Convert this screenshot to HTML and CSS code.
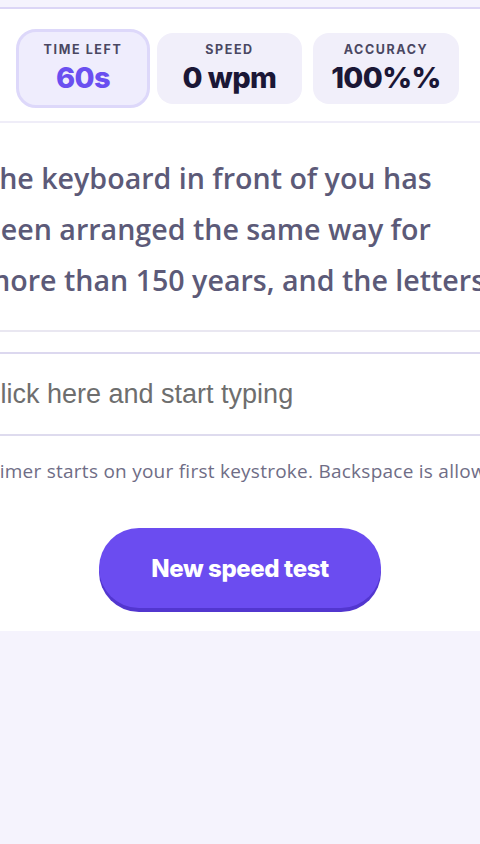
FILE: index.html
```html
<!DOCTYPE html>
<html lang="en">
<head>
    <meta charset="UTF-8">
    <meta name="viewport" content="width=device-width, initial-scale=1.0">
    <title>Typing Speed Test</title>
    <link rel="stylesheet" href="styles.css">
</head>
<body>
    <div class="page">
        <div class="card">
            <div class="stats">
                <div class="stat stat-active stat-time">
                    <span class="stat-label">Time left</span>
                    <span class="stat-value">60s</span>
                </div>
                <div class="stat stat-speed">
                    <span class="stat-label">Speed</span>
                    <span class="stat-value">0 wpm</span>
                </div>
                <div class="stat stat-acc">
                    <span class="stat-label">Accuracy</span>
                    <span class="stat-value">100%%</span>
                </div>
            </div>

            <div class="passage">
                <p>The keyboard in front of you has been arranged the same way for more than 150 years, and the letters</p>
            </div>

            <div class="typing">
                <input class="typing-input" type="text" placeholder="Click here and start typing">
            </div>

            <p class="hint">Timer starts on your first keystroke. Backspace is allowed.</p>

            <div class="actions">
                <button class="btn-new" type="button">New speed test</button>
            </div>
        </div>
    </div>
</body>
</html>
```

FILE: styles.css
```css
html, body {
    margin: 0;
    padding: 0;
}
body {
    background-color: #f5f3fd;
    overflow: hidden;
    font-family: "Open Sans", Arial, sans-serif;
}
.page {
    width: 480px;
    padding-top: 7px;
}
.card {
    margin: 0 -60px;
    background: #fff;
    border-top: 2px solid #dcd6f6;
    box-shadow: 0 5px 0 #d6d0f3;
    padding: 20px 0 23px;
}
.stats {
    display: flex;
    justify-content: center;
    align-items: center;
    gap: 7px;
    padding-right: 5px;
}
.stat {
    display: flex;
    flex-direction: column;
    align-items: center;
    justify-content: center;
    box-sizing: border-box;
    height: 71px;
    border-radius: 16px;
    background: #f1effa;
    font-family: Inter, "Open Sans", sans-serif;
}
.stat-time { width: 134px; }
.stat-speed { width: 145px; }
.stat-acc { width: 146px; margin-left: 4px; }
.stat-active {
    height: 79px;
    background: #efedfd;
    border: 3px solid #ddd8fa;
    border-radius: 20px;
}
.stat-label {
    font-size: 12.5px;
    font-weight: 700;
    letter-spacing: 1.6px;
    text-transform: uppercase;
    color: #4a4762;
    line-height: 16px;
}
.stat-value {
    margin-top: 3px;
    font-size: 29px;
    font-weight: 800;
    color: #1b1736;
    line-height: 34px;
    letter-spacing: -0.6px;
}
.stat-active .stat-value {
    color: #6a4ff0;
}
.passage {
    margin-top: 13px;
    border-top: 2px solid #efedf8;
    border-bottom: 2px solid #e9e7f1;
    padding: 29px 0 25px;
}
.passage p {
    margin: 0 0 0 43px;
    width: 520px;
    font-size: 28.6px;
    line-height: 51px;
    font-weight: 550;
    color: #5c5a78;
}
.typing {
    margin-top: 20px;
    border-top: 2px solid #dcd8ef;
    border-bottom: 2px solid #dedbee;
}
.typing-input {
    display: block;
    box-sizing: border-box;
    width: 100%;
    height: 80px;
    border: none;
    outline: none;
    padding: 0 0 0 41px;
    font-family: "Liberation Sans", Arial, sans-serif;
    font-size: 27px;
    background: #fff;
}
.typing-input::placeholder {
    color: #6e6e6e;
}
.hint {
    margin: 22px 0 0;
    padding-left: 49px;
    font-size: 19px;
    letter-spacing: 0.25px;
    color: #6f6d86;
    white-space: nowrap;
}
.actions {
    display: flex;
    justify-content: center;
    margin-top: 44px;
}
.btn-new {
    width: 282px;
    height: 80px;
    border: none;
    border-radius: 40px;
    background: #6b4cf0;
    box-shadow: 0 4px 0 #5236cf;
    color: #fff;
    font-family: Inter, "Open Sans", sans-serif;
    font-size: 24px;
    font-weight: 800;
    letter-spacing: -0.4px;
    cursor: pointer;
}
```
